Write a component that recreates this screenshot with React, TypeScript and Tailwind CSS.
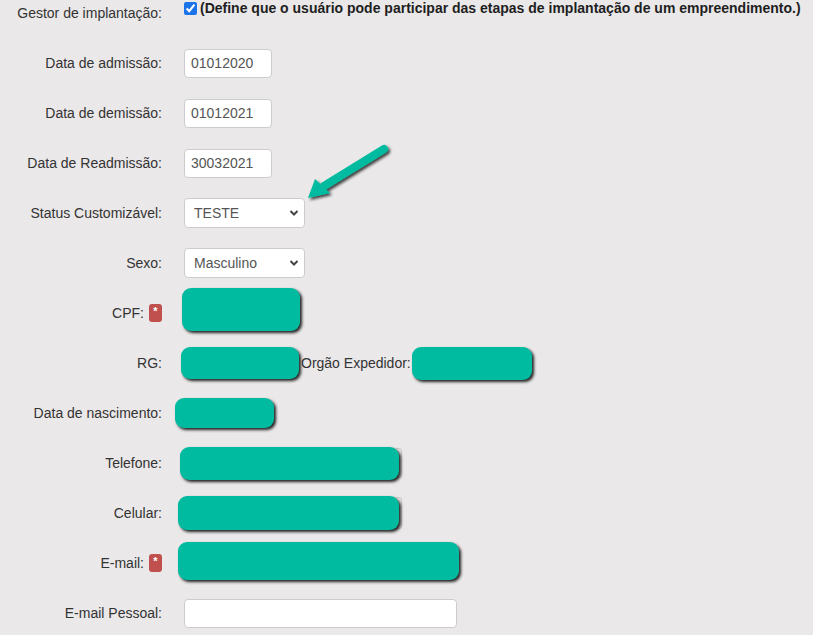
import React from "react";

const Chevron = () => (
  <svg width="10" height="7" viewBox="0 0 10 7" className="absolute right-[5px] top-1/2 -translate-y-1/2">
    <path d="M1.5 1.5 L5 5 L8.5 1.5" fill="none" stroke="#444" strokeWidth="2" />
  </svg>
);

function Badge() {
  return (
    <span className="ml-[5px] inline-flex h-[18px] w-[13px] justify-center rounded-[3px] bg-[#c0504d] pt-[1px] text-[11px] font-bold leading-[12px] text-white">*</span>
  );
}

function Row({ label, badge, children }: { label: string; badge?: boolean; children?: React.ReactNode }) {
  return (
    <div className="flex h-[50px] items-center">
      <div className="flex w-[162px] shrink-0 items-center justify-end">
        <span>{label}</span>
        {badge && <Badge />}
      </div>
      {children}
    </div>
  );
}

function TextInput({ value, w }: { value?: string; w: string }) {
  return (
    <div className={`ml-[22px] flex h-[29px] items-center rounded-[4px] border border-[#ccc] bg-white pl-[6px] text-[#555] ${w}`}>
      {value}
    </div>
  );
}

function Select({ value }: { value: string }) {
  return (
    <div className="relative ml-[22px] flex h-[30px] w-[121px] items-center rounded-[4px] border border-[#ccc] bg-white pl-[9px] text-[#555]">
      {value}
      <Chevron />
    </div>
  );
}

export default function App() {
  const teal = "rounded-[9px] bg-[#00bba0] shadow-[2px_2px_3px_rgba(0,0,0,0.85)]";
  return (
    <div
      className="relative h-[635px] w-[813px] overflow-hidden bg-[#eae8e9] text-[14px] text-[#333]"
      style={{ fontFamily: '"Liberation Sans", Arial, sans-serif' }}
    >
      <div className="mb-[12px] flex h-[26px] items-center">
        <div className="w-[162px] shrink-0 text-right">Gestor de implantação:</div>
        <div className="-mt-[10px] ml-[22px] flex items-center">
          <input type="checkbox" defaultChecked className="m-0 h-[13px] w-[13px] accent-[#1a73e8]" />
          <span className="ml-[3px] text-[14px] font-bold text-[#1e1e1e]">
            (Define que o usuário pode participar das etapas de implantação de um empreendimento.)
          </span>
        </div>
      </div>

      <Row label="Data de admissão:"><TextInput value="01012020" w="w-[88px]" /></Row>
      <Row label="Data de demissão:"><TextInput value="01012021" w="w-[88px]" /></Row>
      <Row label="Data de Readmissão:"><TextInput value="30032021" w="w-[88px]" /></Row>
      <Row label="Status Customizável:"><Select value="TESTE" /></Row>
      <Row label="Sexo:"><Select value="Masculino" /></Row>
      <Row label="CPF:" badge>
        <div className={`ml-[20px] -mt-[7px] h-[43px] w-[118px] ${teal}`} />
      </Row>
      <Row label="RG:">
        <div className={`ml-[19px] h-[32px] w-[118px] ${teal}`} />
        <span className="ml-[2px]">Orgão Expedidor:</span>
        <div className={`ml-[1px] h-[33px] w-[120px] ${teal}`} />
      </Row>
      <Row label="Data de nascimento:">
        <div className={`ml-[13px] h-[30px] w-[99px] ${teal}`} />
      </Row>
      <Row label="Telefone:">
        <div className="relative ml-[18px]">
          <div className="absolute -right-[3px] top-[1px] h-[30px] w-[6px] rounded-r-[3px] border border-l-0 border-[#ccc]" />
          <div className={`relative h-[33px] w-[219px] ${teal}`} />
        </div>
      </Row>
      <Row label="Celular:">
        <div className="relative ml-[16px]">
          <div className="absolute -right-[3px] top-[1px] h-[32px] w-[6px] rounded-r-[3px] border border-l-0 border-[#ccc]" />
          <div className={`relative h-[34px] w-[221px] ${teal}`} />
        </div>
      </Row>
      <Row label="E-mail:" badge>
        <div className={`ml-[16px] -mt-[5px] h-[38px] w-[281px] ${teal}`} />
      </Row>
      <Row label="E-mail Pessoal:"><TextInput w="w-[273px]" /></Row>

      {/* arrow pointing at the status select */}
      <svg className="absolute left-[298px] top-[138px]" width="100" height="70" viewBox="0 0 100 70">
        <defs>
          <filter id="sh" x="-20%" y="-20%" width="150%" height="150%">
            <feDropShadow dx="2" dy="2" stdDeviation="1.5" floodColor="#000" floodOpacity="0.75" />
          </filter>
        </defs>
        <g filter="url(#sh)" fill="#00bba0">
          <line x1="86" y1="11" x2="26" y2="48" stroke="#00bba0" strokeWidth="8" strokeLinecap="round" />
          <polygon points="10,60 17,41 32,55" />
        </g>
      </svg>
    </div>
  );
}
